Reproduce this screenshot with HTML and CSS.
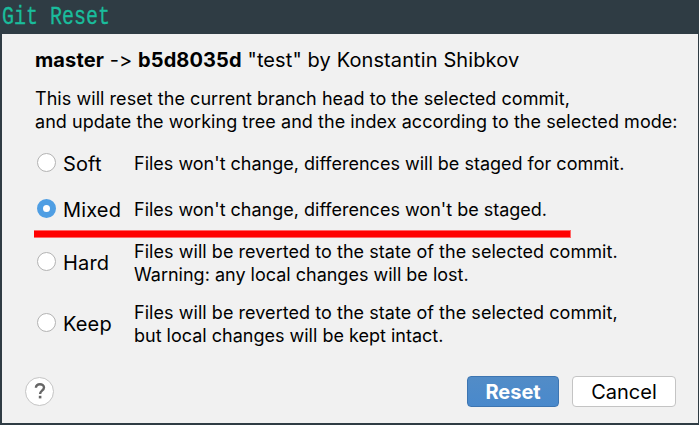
FILE: index.html
```html
<!DOCTYPE html>
<html lang="en">
<head>
<meta charset="utf-8">
<title>Git Reset</title>
<link rel="stylesheet" href="styles.css">
</head>
<body>
<div class="window">
  <header class="titlebar"><span class="title">Git Reset</span></header>
  <main class="dialog">
    <h1 class="target"><b>master</b> -&gt; <b>b5d8035d</b> "test" by Konstantin Shibkov</h1>
    <p class="intro"><span class="line wide">This will reset the current branch head to the selected commit,</span><span class="line wide">and update the working tree and the index according to the selected mode:</span></p>
    <div class="modes">
      <div class="mode soft"><span class="radio"></span><span class="name">Soft</span><p class="desc"><span class="line">Files won't change, differences will be staged for commit.</span></p></div>
      <div class="mode mixed"><span class="radio checked"></span><span class="name">Mixed</span><p class="desc"><span class="line">Files won't change, differences won't be staged.</span></p></div>
      <div class="underline"></div>
      <div class="mode hard"><span class="radio"></span><span class="name">Hard</span><p class="desc"><span class="line wide">Files will be reverted to the state of the selected commit.</span><span class="line">Warning: any local changes will be lost.</span></p></div>
      <div class="mode keep"><span class="radio"></span><span class="name">Keep</span><p class="desc"><span class="line wide">Files will be reverted to the state of the selected commit,</span><span class="line">but local changes will be kept intact.</span></p></div>
    </div>
    <footer class="actions">
      <span class="help"><svg width="14" height="18" viewBox="0 0 14 18"><path d="M2.9 5.7C2.9 3.6 4.5 2.3 6.9 2.3s4.1 1.3 4.1 3.2c0 1.6-1 2.3-2.2 3.3C7.6 9.8 7.1 10.3 7.1 12" fill="none" stroke="#666" stroke-width="2.4"/><path d="M5.8 13.8h2.6v2.6H5.8z" fill="#666"/></svg></span>
      <span class="button primary">Reset</span>
      <span class="button">Cancel</span>
    </footer>
  </main>
</div>
</body>
</html>
```

FILE: styles.css
```css
* { box-sizing: border-box; }
body { margin: 0; overflow: hidden; font-family: Inter, "Liberation Sans", sans-serif; color: #000; font-feature-settings: "calt" 0; }
.window { width: 699px; height: 425px; padding: 0 1px 2px 2px; background: #2f3c44; }
.titlebar { height: 34px; overflow: hidden; }
.title { display: block; width: max-content; font: 26px/35px "Liberation Mono", monospace; color: #1abc9c; -webkit-text-stroke: .3px #1abc9c; transform: scaleX(.77); transform-origin: left; }
.dialog { height: 389px; background: #f1f1f1; padding-left: 33px; display: flex; flex-direction: column; }
h1, p { margin: 0; }
.target { margin-top: 14px; font-size: 20px; line-height: 24px; font-weight: 400; white-space: nowrap; letter-spacing: .11px; }
.target b { font-weight: 700; }
.line { display: block; white-space: nowrap; font-size: 18px; line-height: 23px; }
.wide { letter-spacing: .05px; }
.intro { margin-top: 15px; }
.modes { height: 236px; flex: none; display: flex; flex-direction: column; }
.mode { display: flex; align-items: center; flex: none; height: 46px; }
.soft { margin-top: 7px; }
.underline { width: 537px; height: 8px; margin: -2px 0 0 -1.5px; background: #f00; border: solid #f66; border-width: 1px 1px 1px 0; flex: none; }
.hard { margin-top: 2px; }
.keep { margin-top: 15px; }
.radio { width: 19px; height: 19px; margin-left: 2px; margin-bottom: 3px; border: 1px solid #b3b3b3; border-radius: 50%; background: #fff; flex: none; }
.checked { border: 6px solid #4f9ee3; }
.name { width: 71px; margin-left: 7px; font-size: 20px; line-height: 24px; letter-spacing: .15px; }
.soft .name, .mixed .name { margin-top: 2px; }
.soft .radio, .mixed .radio { margin-bottom: 1px; }
.actions { height: 30px; margin-top: auto; margin-bottom: 17px; display: flex; align-items: center; }
.help { width: 29px; height: 29px; margin-left: -10px; margin-right: auto; display: flex; align-items: center; justify-content: center; background: #fff; border: 1px solid #c4c4c4; border-radius: 50%; }
.button { width: 104px; height: 31px; margin-right: 22px; border: 1px solid #c4c4c4; border-radius: 4px; background: #fff; font-size: 20px; line-height: 30px; text-align: center; }
.primary { width: 92px; margin-right: 13px; border-color: #3d75b1; background: linear-gradient(#528cc7, #4989cc); color: #fff; font-weight: 700; }
```
